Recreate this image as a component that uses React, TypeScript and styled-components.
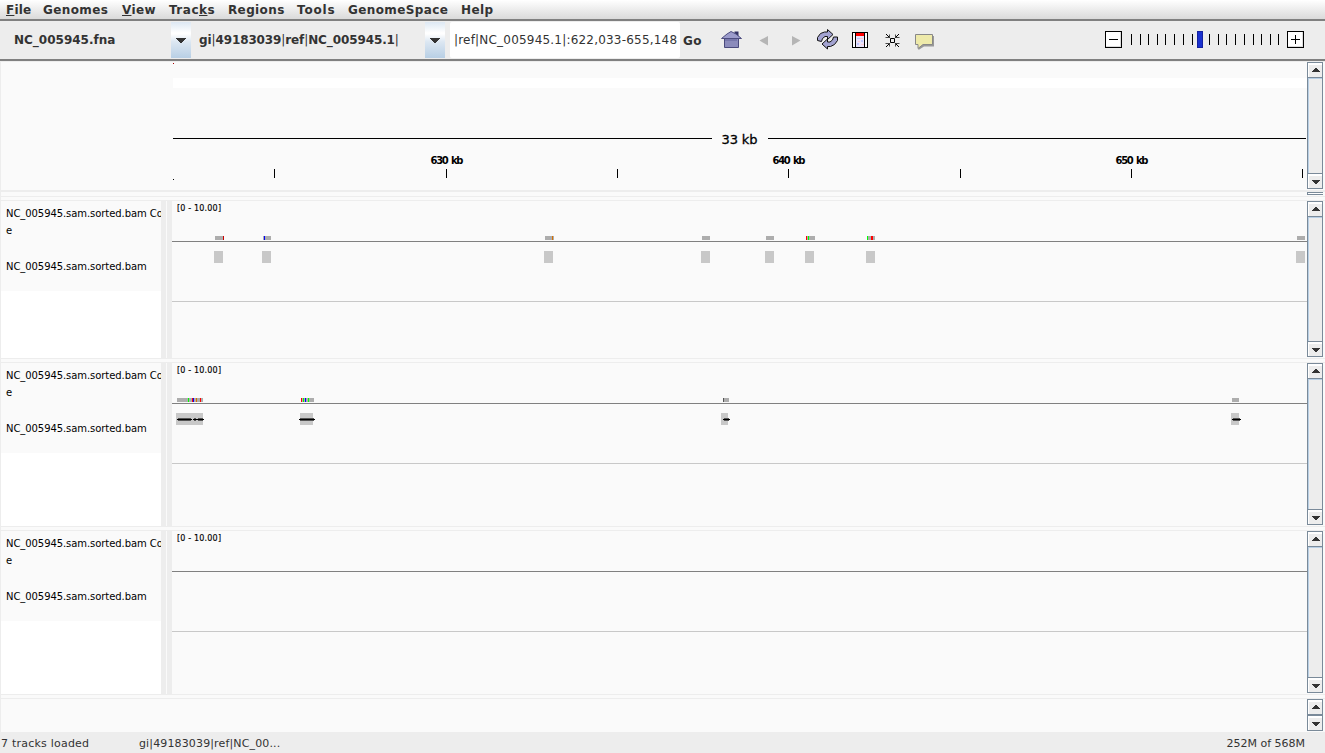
import React from 'react';
import styled, { createGlobalStyle } from 'styled-components';

const Global = createGlobalStyle`
  * { box-sizing: border-box; }
  body { margin: 0; background: #ededed; overflow: hidden; }
  body, text { font-family: "DejaVu Sans", sans-serif; }
`;

const Window = styled.div`
  width: 1325px; height: 753px; display: flex; flex-direction: column;
  background: #ededed; color: #333; font-size: 12px; white-space: pre;
`;
const MenuBar = styled.nav`
  height: 21px; flex: none; display: flex; padding-left: 6px;
  background: linear-gradient(#fff, #dadada); border-bottom: 2px solid #808080;
  font-weight: bold; line-height: 20px;
`;
const MenuItem = styled.div<{ $w: number; $ls?: number }>`
  width: ${p => p.$w}px; height: 19px; flex: none; letter-spacing: ${p => p.$ls ?? 0.38}px;
  u { text-underline-offset: 1px; text-decoration-thickness: 1px; text-decoration-skip-ink: none; }
`;
const Toolbar = styled.div`
  height: 40px; flex: none; display: flex; align-items: flex-start; padding-top: 1px;
  border-bottom: 2px solid #808080;
`;
const ComboText = styled.div<{ $w: number; $pad: number; $ls?: number }>`
  width: ${p => p.$w}px; padding-left: ${p => p.$pad}px; height: 36px; line-height: 36px;
  font-weight: bold; flex: none; letter-spacing: ${p => p.$ls ?? 0}px;
  span { font-weight: normal; }
`;
const ComboButton = styled.div`
  width: 20px; height: 36px; flex: none; display: flex; align-items: center; justify-content: center;
  background: linear-gradient(#dde8f3 0%, #fff 30%, #fff 33%, #dce7f2 55%, #b8cfe5 100%);
  svg { margin-top: 1px; }
`;
const Locus = styled.div`
  width: 230px; height: 36px; margin-left: 5px; padding-left: 4px; flex: none; line-height: 36px;
  background: #fff; border-radius: 2px; letter-spacing: 0.2px;
`;
const Go = styled.div`
  width: 38px; padding-left: 3px; flex: none; font-weight: bold; line-height: 38px; letter-spacing: 0.4px;
`;
const Icons = styled.svg` flex: none; display: block; `;
const Slider = styled.div`
  display: flex; align-items: center; height: 35px; margin-left: 170px;
`;
const ZoomButton = styled.div`
  width: 17px; height: 17px; border: 1px solid #000; background: #fff; flex: none;
  box-shadow: inset -1px -1px #ddd;
  svg { display: block; }
`;
const Main = styled.main`
  flex: 1; display: flex; flex-direction: column; background: #fafafa;
  border-left: 1px solid #ededed; border-top: 1px solid #ededed;
`;
const Panel = styled.section<{ $h: number }>`
  height: ${p => p.$h}px; flex: none; display: flex;
`;
const Strip = styled.div<{ $h: number; $lines?: boolean }>`
  height: ${p => p.$h}px; flex: none; background: ${p => (p.$lines ? '#fafafa' : '#ededed')};
  ${p => p.$lines && 'border-top: 1px solid #ededed; border-bottom: 1px solid #ededed;'}
`;
const Sash = styled.div`
  height: 4px; flex: none; padding: 0 2px 0 1306px;
  div { height: 3px; border: 1px solid #7a8a99; border-right-width: 0; background: #fff; }
`;
const Names = styled.div` width: 160px; flex: none; background: #fff; overflow: hidden; `;
const NameBlock = styled.div`
  height: 90px; background: #fafafa; padding: 4px 0 0 5px; color: #000; font-size: 10px; line-height: 17px;
`;
const NameLine = styled.div<{ $h?: number; $gap?: number }>`
  height: ${p => p.$h ?? 16}px; margin-top: ${p => p.$gap ?? 0}px; letter-spacing: -0.07px;
`;
const Divider = styled.div`
  width: 11px; flex: none; background: linear-gradient(90deg, #ededed 5px, #fafafa 5px, #fafafa 6px, #ededed 6px);
`;
const Chart = styled.svg` display: block; flex: none; width: 1135px; `;
const HeaderGap = styled.div` width: 171px; flex: none; `;
const Wide = styled.div` width: 1306px; flex: none; `;
const Bar = styled.div`
  width: 16px; margin-bottom: 1px; flex: none; display: flex; flex-direction: column;
  border: 1px solid #7a8a99; background: #ededed;
`;
const BarButton = styled.div<{ $up?: boolean }>`
  height: 14px; flex: none; display: flex; align-items: center; justify-content: center;
  background: #ededed; border-left: 1px solid #fff; border-top: 2px solid #fff;
  padding-bottom: ${p => (p.$up ? 3 : 0)}px;
`;
const Thumb = styled.div`
  flex: 1; border: 1px solid #7a8a99; border-width: 1px 0;
  box-shadow: inset 1px 1px #b8cfe5;
`;
const Status = styled.footer`
  height: 21px; flex: none; display: flex; align-items: center; font-size: 11px; padding: 2px 20px 0 1px;
`;
const StatusCell = styled.div<{ $w?: number; $ls?: number }>`
  ${p => (p.$w ? `width: ${p.$w}px;` : 'margin-left: auto;')} letter-spacing: ${p => p.$ls ?? 0}px;
`;

const Arrow = ({ up }: { up?: boolean }) => (
  <svg width="8" height="4" shapeRendering="crispEdges" fill="#333">
    {[0, 1, 2, 3].map(i => (
      <rect key={i} x={i} y={up ? 3 - i : i} width={8 - 2 * i} height="1" />
    ))}
  </svg>
);

const ComboArrow = () => (
  <svg width="10" height="5" shapeRendering="crispEdges" fill="#333">
    {[0, 1, 2, 3, 4].map(i => (
      <rect key={i} x={i} y={i} width={10 - 2 * i} height="1" />
    ))}
  </svg>
);

const ScrollBar = () => (
  <Bar>
    <BarButton $up><Arrow up /></BarButton>
    <Thumb />
    <BarButton><Arrow /></BarButton>
  </Bar>
);

const ToolIcons = () => (
  <Icons width="217" height="36" viewBox="718 22 217 36">
    <path d="M734.500 31.500h4v6h-4z" fill="#333366" />
    <path d="M724.500 38.500h14v9h-14z" fill="#8b8bbb" stroke="#4a4a7c" />
    <path d="M721.500 38.500l5.500-4.500 4-2.500 5 2.500 5.500 4.500z" fill="#9c9ccc" stroke="#4d4d80" />
    <path d="M725 40h12" stroke="#626299" />
    <path d="M759.500 40.500l8.500-4.500v9.500z" fill="#b5b5b5" />
    <path d="M800.500 40.500l-8.500-4.500v9.500z" fill="#b5b5b5" />
    <g fill="#a3a3d1" stroke="#111" strokeWidth="1">
      <path d="M817.500 40.500v-3l3-4 4-1.500h3v-2.500l5.500 5-5.500 5v-3h-2.500l-2.500 2-1 3z" />
      <path d="M837.500 37v3.500l-3 4-4 2h-3v2.500l-5.500-5 5.500-5v3h2.500l2.500-2 1-3z" />
    </g>
    <g shapeRendering="crispEdges">
      <path d="M852 32h16v16h-16z" fill="#000" />
      <path d="M853 33h2v14h-2zM865 33h2v14h-2z" fill="#fff" />
      <path d="M856 33h8v14h-8z" fill="#e9e4fb" />
      <path d="M856 33h8v3h-8z" fill="#f00" />
      <path d="M857 38h3v1h-3zM861 40h2v2h-2zM857 43h2v2h-2z" fill="#bfc5ff" />
      <path d="M860 38h3v1h-3zM858 41h2v1h-2zM861 44h3v1h-3z" fill="#ffc9d3" />
    </g>
    <g fill="none" stroke="#000">
      <path d="M890.500 38.500h4v4h-4zM886 34l3.500 3.500M899 34l-3.500 3.500M886 47l3.500-3.500M899 47l-3.500-3.500" />
      <path d="M889.500 34.500v3h-4M895.500 34.500v3h4M889.500 46.500v-3h-4M895.500 46.500v-3h4" strokeWidth=".7" />
    </g>
    <path d="M917 36h17v10.500h-10l-5.500 3.500z" fill="#999" />
    <path d="M915.500 34.500h17v10h-9.500l-5 4v-4h-2.500z" fill="#eeeaaa" stroke="#888" />
  </Icons>
);

const ticks = [1131, 1140, 1148, 1157, 1165, 1174, 1183, 1192, 1209, 1218, 1226, 1235, 1244, 1253, 1261, 1270, 1278];

const ZoomSlider = () => (
  <Slider>
    <ZoomButton><svg width="15" height="15"><path d="M3 7.500h9" stroke="#000" /></svg></ZoomButton>
    <Icons width="165" height="17" viewBox="1122 31 165 17" shapeRendering="crispEdges">
      {ticks.map(x => <rect key={x} x={x} y="34" width="1" height="11" />)}
      <rect x="1197" y="31" width="6" height="17" fill="#1522a0" />
      <rect x="1198" y="32" width="4" height="15" fill="#1a32d0" />
    </Icons>
    <ZoomButton><svg width="15" height="15"><path d="M3 7.500h9M7.500 3v9" stroke="#000" /></svg></ZoomButton>
  </Slider>
);

const Ruler = () => (
  <Chart height="128" viewBox="172 62 1135 128">
    <g shapeRendering="crispEdges">
      <rect x="173" y="78" width="1134" height="10" fill="#fff" />
      <path d="M173 63h1v1h-1z" fill="#a00" />
      <path d="M173 179h1v1h-1zM173 138h539v1h-539zM768 138h538v1h-538z" />
      {[274, 446, 617, 788, 960, 1131, 1302].map(x => <rect key={x} x={x} y="169" width="1" height="9" />)}
    </g>
    <text x="721.500" y="144" fontSize="13" textLength="36" stroke="#000" strokeWidth=".3">33 kb</text>
    <g fontSize="10" fontWeight="bold" wordSpacing="1.500">
      <text x="430.500" y="164" textLength="33">630 kb</text>
      <text x="772.500" y="164" textLength="33">640 kb</text>
      <text x="1115.500" y="164" textLength="33">650 kb</text>
    </g>
  </Chart>
);

type Mark = [number, number, string];
type Read = [number, number];
interface Track { height: number; cover: Mark[]; reads: Read[]; lines?: Read[] }

const G = '#adadad';
const tracks: Track[] = [
  {
    height: 157,
    cover: [
      [215, 9, G], [223, 1, '#c00'], [263, 8, G], [264, 1, '#00f'], [545, 9, G], [552, 1, '#d87000'],
      [702, 8, G], [766, 8, G], [806, 9, G], [806, 1, '#f00'], [808, 1, '#0f0'],
      [867, 8, G], [867, 1, '#0f0'], [871, 2, '#f00'], [1297, 8, G],
    ],
    reads: [[214, 9], [262, 9], [544, 9], [701, 9], [765, 9], [805, 9], [866, 9], [1296, 9]],
  },
  {
    height: 163,
    cover: [
      [177, 26, G], [188, 1, '#0f0'], [192, 1, '#f00'], [193, 1, '#00f'], [196, 1, '#d87000'], [200, 1, '#f00'],
      [301, 13, G], [301, 1, '#f00'], [303, 1, '#0f0'], [305, 1, '#00f'], [308, 1, '#0f0'],
      [723, 6, G], [723, 1, '#555'], [1232, 7, G],
    ],
    reads: [[176, 27], [300, 13], [721, 7], [1231, 8]],
    lines: [[177, 14], [193, 3], [197, 6], [299, 15], [723, 6], [1232, 8]],
  },
  { height: 163, cover: [], reads: [] },
];

const TrackPanel = ({ height, cover, reads, lines = [] }: Track) => (
  <Panel $h={height}>
    <Names>
      <NameBlock>
        <NameLine $h={17}>NC_005945.sam.sorted.bam Co</NameLine>
        <NameLine>e</NameLine>
        <NameLine $gap={20}>NC_005945.sam.sorted.bam</NameLine>
      </NameBlock>
    </Names>
    <Divider />
    <Chart height={height} viewBox={`172 0 1135 ${height}`}>
      <text x="177" y="10" fontSize="8" textLength="44" stroke="#000" strokeWidth=".15">[0 - 10.00]</text>
      <g shapeRendering="crispEdges">
        {cover.map(([x, w, fill], i) => <rect key={i} x={x} y="35" width={w} height="4" fill={fill} />)}
        <rect x="172" y="40" width="1135" height="1" fill="#808080" />
        {reads.map(([x, w]) => <rect key={x} x={x} y="50" width={w} height="12" fill="#c8c8c8" />)}
        {lines.map(([x, w]) => (
          <g key={x}>
            <rect x={x + 1} y="55" width={w - 1} height="3" fill="#555" />
            <rect x={x} y="56" width={w + 1} height="1" fill="#000" />
          </g>
        ))}
        <rect x="172" y="100" width="1135" height="1" fill="#c8c8c8" />
      </g>
    </Chart>
    <ScrollBar />
  </Panel>
);

export default function App() {
  return (
    <Window>
      <Global />
      <MenuBar>
        <MenuItem $w={37} $ls={0.2}><u>F</u>ile</MenuItem>
        <MenuItem $w={79}>Genomes</MenuItem>
        <MenuItem $w={47}><u>V</u>iew</MenuItem>
        <MenuItem $w={59} $ls={0.5}>Trac<u>k</u>s</MenuItem>
        <MenuItem $w={69}>Regions</MenuItem>
        <MenuItem $w={51} $ls={0.8}>Tools</MenuItem>
        <MenuItem $w={113}>GenomeSpace</MenuItem>
        <MenuItem $w={40}>Help</MenuItem>
      </MenuBar>
      <Toolbar>
        <ComboText $w={171} $pad={14}>NC_005945.fna</ComboText>
        <ComboButton><ComboArrow /></ComboButton>
        <ComboText $w={234} $pad={8} $ls={-0.11}>gi<span>|</span>49183039<span>|</span>ref<span>|</span>NC_005945.1<span>|</span></ComboText>
        <ComboButton><ComboArrow /></ComboButton>
        <Locus>|ref|NC_005945.1|:622,033-655,148</Locus>
        <Go>Go</Go>
        <ToolIcons />
        <ZoomSlider />
      </Toolbar>
      <Main>
        <Panel $h={128}><HeaderGap /><Ruler /><ScrollBar /></Panel>
        <Strip $h={2} />
        <Sash><div /></Sash>
        <Strip $h={5} $lines />
        <TrackPanel {...tracks[0]} />
        <Strip $h={5} $lines />
        <TrackPanel {...tracks[1]} />
        <Strip $h={5} $lines />
        <TrackPanel {...tracks[2]} />
        <Strip $h={5} $lines />
        <Panel $h={33}><Wide /><ScrollBar /></Panel>
      </Main>
      <Status>
        <StatusCell $w={138} $ls={0.22}>7 tracks loaded</StatusCell>
        <StatusCell $w={200} $ls={0.14}>gi|49183039|ref|NC_00...</StatusCell>
        <StatusCell>252M of 568M</StatusCell>
      </Status>
    </Window>
  );
}
